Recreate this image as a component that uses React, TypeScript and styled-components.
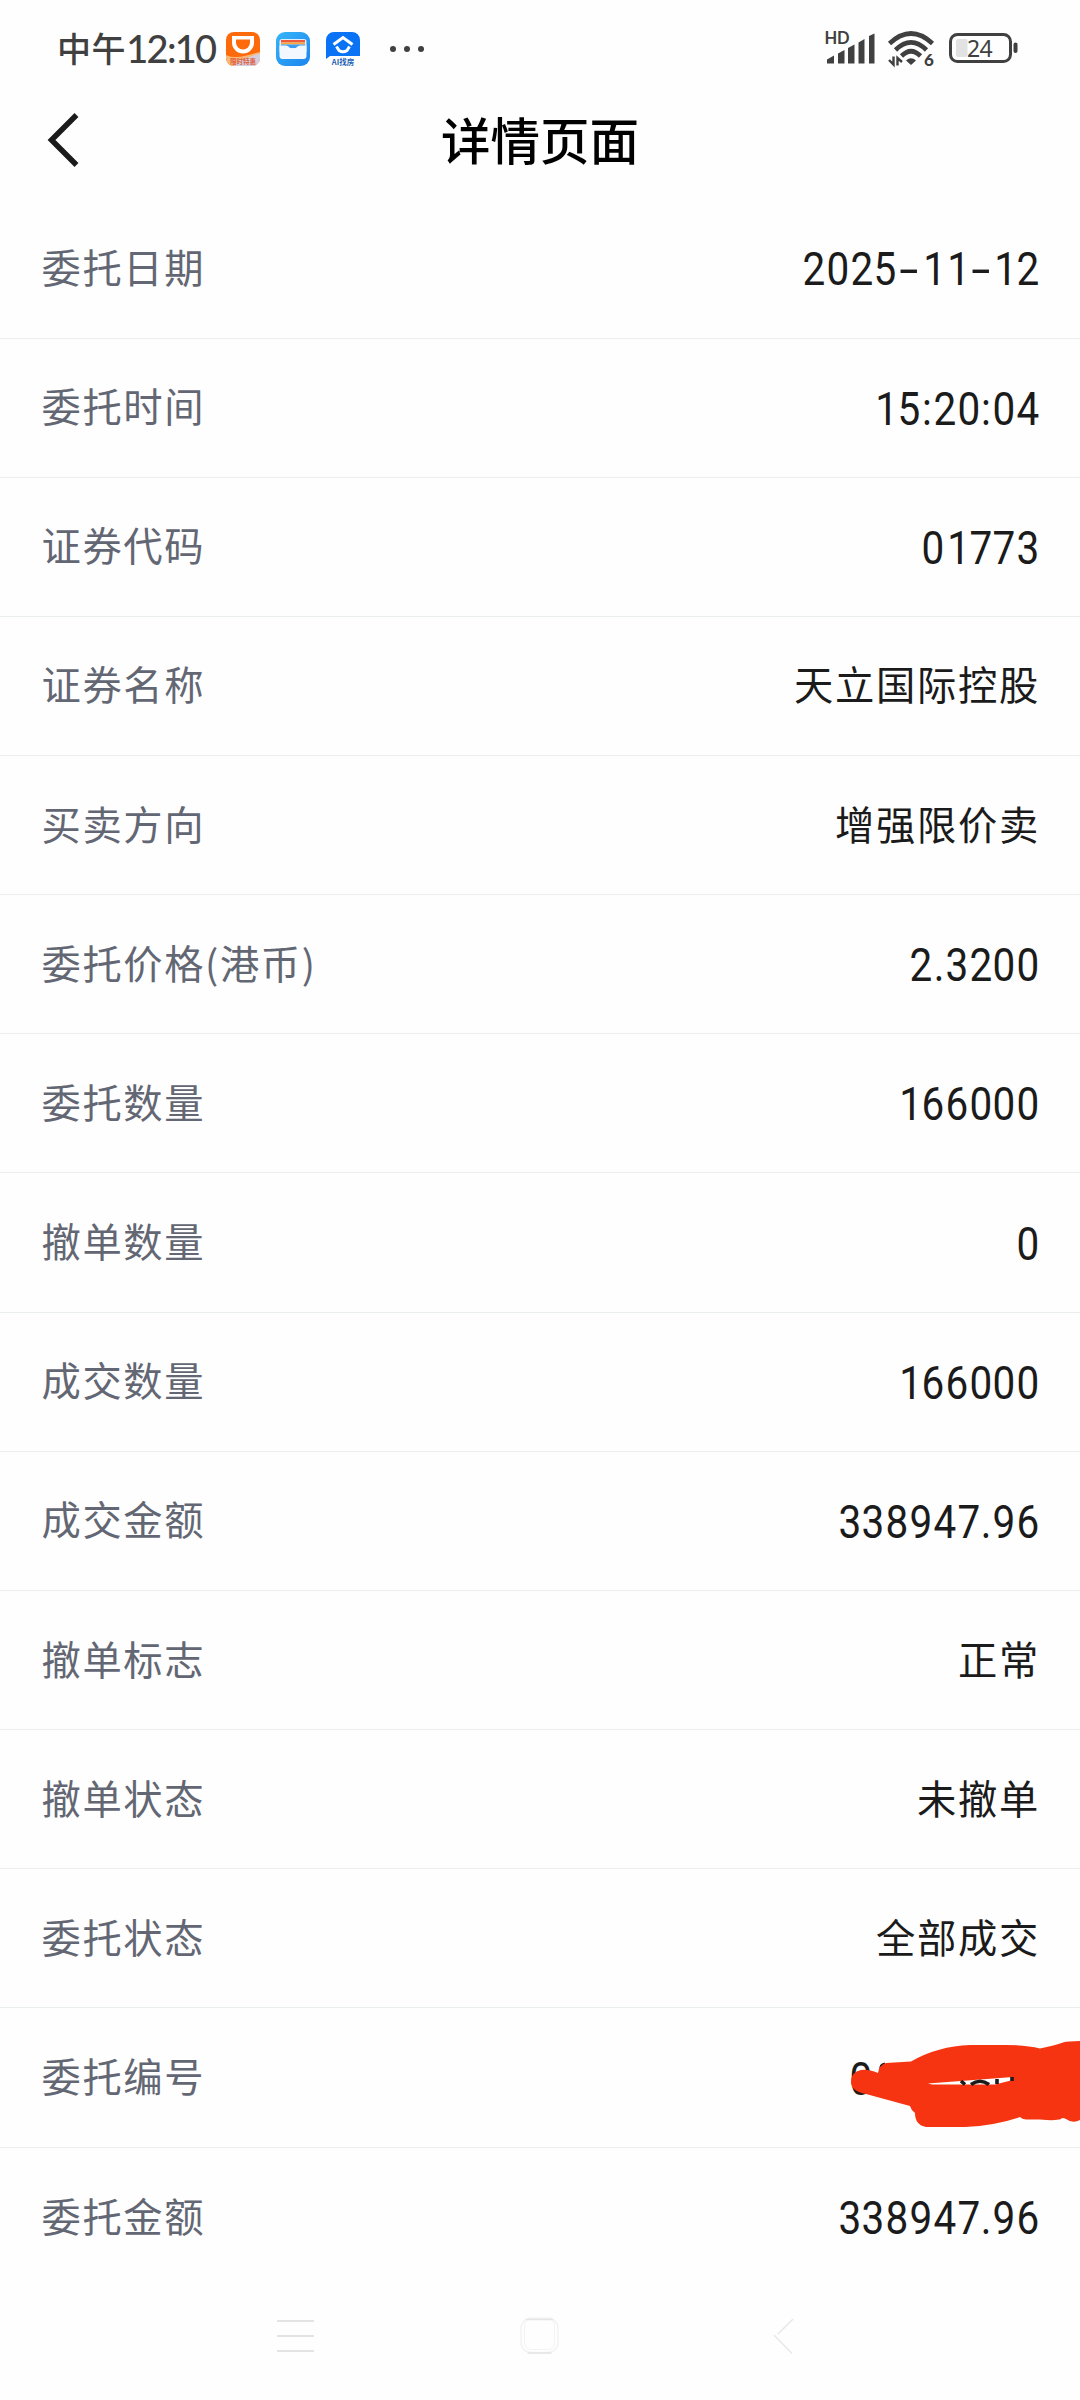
import React from 'react';
import styled, { createGlobalStyle } from 'styled-components';

const GlobalStyle = createGlobalStyle`
  * { box-sizing: border-box; }
  body { margin: 0; background: #fefefe; }
`;

const Screen = styled.div`
  width: 1080px;
  height: 2400px;
  display: flex;
  flex-direction: column;
  background: #fefefe;
  overflow: hidden;
  font-family: 'Noto Sans CJK SC', sans-serif;
`;

const StatusBar = styled.div`
  height: 96px;
  padding: 2px 62px 0 57px;
  display: flex;
  justify-content: space-between;
  align-items: center;
`;

const StatusGroup = styled.div`
  display: flex;
  align-items: center;
`;

const Clock = styled.span`
  width: 169px;
  display: flex;
  align-items: center;
  padding-bottom: 2px;
  font-size: 34px;
  line-height: 40px;
  font-weight: 500;
  letter-spacing: 0.6px;
  color: #404040;
  white-space: nowrap;
`;

const ClockDigits = styled.span`
  font-family: Lato, sans-serif;
  font-size: 38px;
  letter-spacing: -1.7px;
`;

const AppIcons = styled.div`
  display: flex;
  gap: 16px;
`;

const MoreDots = styled.svg`
  margin-left: 29px;
`;

const TitleBar = styled.header`
  height: 103.4px;
  padding: 0 46px;
  display: grid;
  grid-template-columns: 80px 1fr 80px;
  align-items: start;
`;

const BackButton = styled.button`
  height: 88px;
  padding: 0;
  border: 0;
  background: none;
  display: flex;
  align-items: center;
`;

const Title = styled.h1`
  margin: 0;
  line-height: 86px;
  font-size: 49.5px;
  font-weight: 500;
  color: #000;
  text-align: center;
`;

const Row = styled.div<{ $last?: boolean }>`
  height: 139.16px;
  padding: 0 40px 5px 41.5px;
  display: flex;
  justify-content: space-between;
  align-items: center;
  border-bottom: ${(p) => (p.$last ? '0' : '1px')} solid #ebeeee;
  position: relative;
`;

const Label = styled.span`
  font-size: 39.3px;
  line-height: 56px;
  letter-spacing: 1.6px;
  color: #636773;
`;

const TextValue = styled.span`
  font-size: 39.3px;
  line-height: 56px;
  letter-spacing: 1.7px;
  color: #1b1b1b;
`;

const NumberValue = styled.span`
  display: flex;
  padding-top: 7px;
  font-family: Roboto, sans-serif;
  font-size: 46px;
  line-height: 56px;
  color: #1b1b1b;
`;

const MaskedValue = styled(NumberValue)`
  margin-right: 167px;
`;

const Digit = styled.span<{ $w: number; $sx: number; $dx: number }>`
  width: ${(p) => p.$w}px;
  display: flex;
  justify-content: center;
  transform: translateX(${(p) => p.$dx}px) scaleX(${(p) => p.$sx});
`;

const Scribble = styled.svg`
  position: absolute;
  right: 0;
  top: 22.5px;
`;

const NavBar = styled.nav`
  flex: 1;
  padding: 29px 284px 0 274px;
  display: flex;
  justify-content: space-between;
  align-items: flex-start;
`;

const HomeIcon = styled.svg`
  margin-left: -10px;
`;

const rows: { label: string; value: string; numeric?: boolean; masked?: boolean }[] = [
  { label: '委托日期', value: '2025-11-12', numeric: true },
  { label: '委托时间', value: '15:20:04', numeric: true },
  { label: '证券代码', value: '01773', numeric: true },
  { label: '证券名称', value: '天立国际控股' },
  { label: '买卖方向', value: '增强限价卖' },
  { label: '委托价格(港币)', value: '2.3200', numeric: true },
  { label: '委托数量', value: '166000', numeric: true },
  { label: '撤单数量', value: '0', numeric: true },
  { label: '成交数量', value: '166000', numeric: true },
  { label: '成交金额', value: '338947.96', numeric: true },
  { label: '撤单标志', value: '正常' },
  { label: '撤单状态', value: '未撤单' },
  { label: '委托状态', value: '全部成交' },
  { label: '委托编号', value: '0', numeric: true, masked: true },
  { label: '委托金额', value: '338947.96', numeric: true },
];

function Digits({ value }: { value: string }) {
  return (
    <>
      {value.split('').map((c, i) => (
        <Digit
          key={i}
          $w={c === '.' || c === ':' ? 12 : 23.8}
          $sx={c === '-' ? 1.5 : 0.88}
          $dx={c === '1' ? 1.8 : 0}
        >
          {c}
        </Digit>
      ))}
    </>
  );
}

function RideIcon() {
  return (
    <svg width="34" height="34" viewBox="0 0 34 34">
      <defs>
        <clipPath id="ride"><rect width="34" height="34" rx="8" /></clipPath>
      </defs>
      <g clipPath="url(#ride)">
        <rect width="34" height="34" fill="#fc6a0c" />
        <path d="M0 23C10 28 22 23 34 20V34H0Z" fill="#f8b878" />
        <path d="M12 28C22 27 28 22 34 22V34H8Z" fill="#d3cfe0" />
        <path d="M8 5.500H26V10.500a9 9 0 0 1-18 0V9.500H20" fill="none" stroke="#fff" strokeWidth="0" />
        <path d="M6 4H28V10.500a11 11 0 0 1-22 0ZM10 7.500V10.500a7 7 0 0 0 14 0V7.500Z" fill="#fff" fillRule="evenodd" />
        <text x="17" y="32" textAnchor="middle" fontSize="6.500" fontWeight="700" fill="#e0603c">限时特惠</text>
      </g>
    </svg>
  );
}

function WalletIcon() {
  return (
    <svg width="34" height="34" viewBox="0 0 34 34">
      <defs>
        <linearGradient id="wallet" x1="0" y1="0" x2="1" y2="1">
          <stop offset="0" stopColor="#35b5f8" />
          <stop offset="1" stopColor="#1c84ee" />
        </linearGradient>
      </defs>
      <rect width="34" height="34" rx="9" fill="url(#wallet)" />
      <rect x="3.500" y="7" width="27" height="14" rx="2.500" fill="#dcecfc" />
      <rect x="5" y="8" width="24" height="2.500" fill="#ee5a3c" />
      <rect x="5" y="10.500" width="24" height="2" fill="#fba93a" />
      <rect x="5" y="12.500" width="24" height="3.500" fill="#3a9cf3" />
      <path d="M3.500 13.500H10C13 13.500 13 16.500 16 16.500H18C21 16.500 21 13.500 24 13.500H30.500V24a3 3 0 0 1-3 3H6.500a3 3 0 0 1-3-3Z" fill="#f3f7fe" />
    </svg>
  );
}

function HouseIcon() {
  return (
    <svg width="34" height="34" viewBox="0 0 34 34">
      <path d="M8 0H26a8 8 0 0 1 8 8V24H4L0 27V8a8 8 0 0 1 8-8Z" fill="#0a72f5" />
      <path d="M7.500 12.500 17 5.500 26.500 12.500" fill="none" stroke="#fff" strokeWidth="3" />
      <path d="M10.500 14.500 13 18.500Q17 21 21 18.500L23.500 14.500" fill="none" stroke="#fff" strokeWidth="3" />
      <text x="17" y="32.500" textAnchor="middle" fontSize="7.500" fontWeight="700" fill="#1a5fb4">AI找房</text>
    </svg>
  );
}

function SystemIcons() {
  return (
    <svg width="196" height="44" viewBox="822 28 196 44" fill="#404040">
      <text x="824.500" y="45" fontFamily="Lato" fontWeight="700" fontSize="16.500" letterSpacing="-.3">HD</text>
      <path d="M827 60.500 834 56.500V64.500H827Z" />
      <path d="M838 54.500 844.500 51V64.500H838Z" />
      <path d="M848 49 854.500 45.500V64.500H848Z" />
      <path d="M858.500 43.500 864.500 40V64.500H858.500Z" />
      <path d="M869 37 874.500 34.500V64.500H869Z" />
      <g fill="none" stroke="#404040">
        <path d="M889.500 44.500Q911 24.500 932.500 44.500" strokeWidth="4.600" />
        <path d="M895.500 51Q911 35.500 926.500 51" strokeWidth="4.600" />
        <path d="M901.500 57Q911 47.500 920.500 57" strokeWidth="4.600" />
        <path d="M893.500 57.500V65.500L889 61M897.500 66.500V59L902 63" strokeWidth="2.400" />
        <rect x="950.500" y="35.500" width="60" height="27" rx="7" strokeWidth="3" />
      </g>
      <path d="M906 61.500Q911 57 916 61.500L911 66Z" />
      <text x="924" y="66.500" fontFamily="Lato" fontWeight="900" fontSize="17">6</text>
      <rect x="956" y="40" width="11.500" height="18" rx="2" fill="#e2e2e2" />
      <rect x="1013.500" y="43.500" width="4" height="10.500" rx="2" />
      <text x="967" y="57.500" fontFamily="Noto Sans" fontSize="23" letterSpacing="-.6">24</text>
    </svg>
  );
}

export default function App() {
  return (
    <Screen>
      <GlobalStyle />
      <StatusBar>
        <StatusGroup>
          <Clock>中午<ClockDigits>12:10</ClockDigits></Clock>
          <AppIcons>
            <RideIcon />
            <WalletIcon />
            <HouseIcon />
          </AppIcons>
          <MoreDots width="36" height="8" viewBox="0 0 36 8" fill="#404040">
            <circle cx="4" cy="4" r="3" />
            <circle cx="18" cy="4" r="3" />
            <circle cx="32" cy="4" r="3" />
          </MoreDots>
        </StatusGroup>
        <SystemIcons />
      </StatusBar>
      <TitleBar>
        <BackButton>
          <svg width="36" height="56" viewBox="0 0 36 56" fill="none" stroke="#1b1b1b" strokeWidth="5.500">
            <path d="M30.500 3 5.500 28 30.500 53" />
          </svg>
        </BackButton>
        <Title>详情页面</Title>
      </TitleBar>
      <main>
        {rows.map((r, i) => (
          <Row key={r.label} $last={i === rows.length - 1}>
            <Label>{r.label}</Label>
            {r.masked ? (
              <>
                <MaskedValue><Digits value={r.value} /></MaskedValue>
                <Scribble width="230" height="100" viewBox="850 2030 230 100">
                  <path d="M881 2069Q880 2064 885 2063" fill="none" stroke="#1b1b1b" strokeWidth="3" />
                  <path
                    fill="#f73411"
                    d="M861 2069Q868 2068 878 2072Q879 2064 886 2062L911 2060.500Q938 2045 970 2044H1006Q1026 2044 1040 2047.500Q1057 2044 1063 2041.500Q1068 2040 1080 2040V2119Q1073 2123 1066 2118Q1062 2116 1061 2118Q1056 2120 1040 2118.500H1026Q1022 2118 1020 2116Q996 2124.500 965 2126H926Q915 2124 915 2112Q911 2109 910 2105L866 2093Q851 2090 851 2081Q851 2071 861 2069Z"
                  />
                  <path d="M928 2082.500 1013 2076V2079L995 2083.500H932Z" fill="#fefefe" />
                  <path
                    d="M961 2080 965 2083.500M971 2083.500Q980 2077 989 2083.500M997 2078V2083M1012 2076V2080"
                    fill="none"
                    stroke="#1b1b1b"
                    strokeWidth="3.600"
                  />
                </Scribble>
              </>
            ) : r.numeric ? (
              <NumberValue><Digits value={r.value} /></NumberValue>
            ) : (
              <TextValue>{r.value}</TextValue>
            )}
          </Row>
        ))}
      </main>
      <NavBar>
        <svg width="44" height="40" viewBox="0 0 44 40" stroke="#e4e4e4" strokeWidth="2">
          <path d="M3 5H40M3 20H40M3 35H40" />
        </svg>
        <HomeIcon width="44" height="40" viewBox="0 0 44 40" fill="none">
          <rect x="3" y="2" width="37" height="34.500" rx="10" stroke="#f3f3f3" strokeWidth="1.500" />
          <rect x="6.500" y="3" width="30" height="30.500" rx="6" stroke="#f3f3f3" strokeWidth="1" />
          <path d="M9 3.500H34M10 37H33" stroke="#e4e4e4" strokeWidth="1.500" strokeLinecap="round" />
        </HomeIcon>
        <svg width="24" height="40" viewBox="0 0 24 40" fill="none" stroke="#e8e8e8" strokeWidth="1.500">
          <path d="M21 3 6 18M2 19 20 37.500" />
        </svg>
      </NavBar>
    </Screen>
  );
}
